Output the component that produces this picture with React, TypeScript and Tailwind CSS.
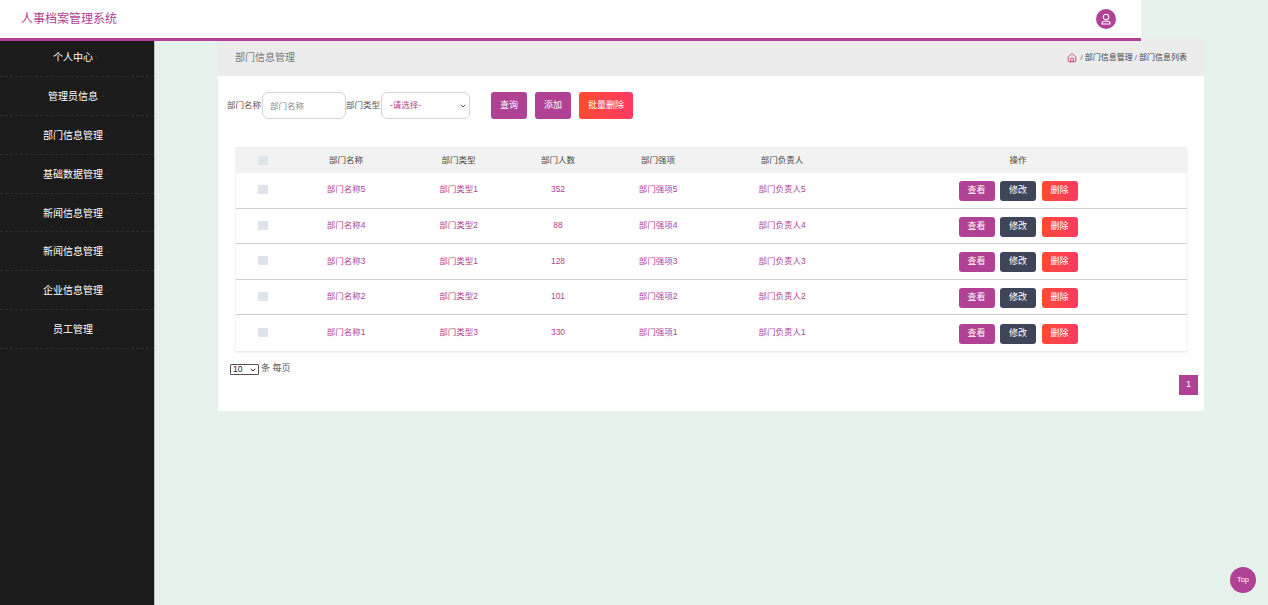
import { Home, ChevronDown } from 'lucide-react';

const menu = ['个人中心', '管理员信息', '部门信息管理', '基础数据管理', '新闻信息管理', '新闻信息管理', '企业信息管理', '员工管理'];

const rows = [
  { name: '部门名称5', type: '部门类型1', count: '352', item: '部门强项5', lead: '部门负责人5' },
  { name: '部门名称4', type: '部门类型2', count: '88', item: '部门强项4', lead: '部门负责人4' },
  { name: '部门名称3', type: '部门类型1', count: '128', item: '部门强项3', lead: '部门负责人3' },
  { name: '部门名称2', type: '部门类型2', count: '101', item: '部门强项2', lead: '部门负责人2' },
  { name: '部门名称1', type: '部门类型3', count: '330', item: '部门强项1', lead: '部门负责人1' },
];

const headers = ['部门名称', '部门类型', '部门人数', '部门强项', '部门负责人'];
const columns = 'grid grid-cols-[54px_112px_113px_86px_114px_134px_338px] items-center text-center text-[8.5px]';
const red = 'bg-gradient-to-r from-[#ff4a2e] to-[#ff3a62]';

function Checkbox() {
  return <span className="mx-auto block h-[9px] w-[10px] bg-[#dfe3ea]" />;
}

function UserIcon() {
  return (
    <svg width="12" height="12" viewBox="0 0 24 24" fill="none" stroke="#fff" strokeWidth="2.2">
      <circle cx="12" cy="8" r="5.5" />
      <path d="M4 22v-1.5A4 4 0 0 1 8 16.5h8a4 4 0 0 1 4 4V22z" />
    </svg>
  );
}

export default function App() {
  return (
    <div className="relative flex h-[605px] w-[1268px] overflow-hidden bg-[#e6f3ec] text-[9px] font-['Liberation_Sans','Noto_Sans_CJK_SC',sans-serif] text-[#555]">
      <header className="absolute top-0 left-0 z-10 flex h-[41px] w-[1141px] items-center justify-between border-b-[3px] border-[#b04194] bg-white pr-[25px] pl-[21px]">
        <h1 className="text-[12px] font-normal text-[#b04194]">人事档案管理系统</h1>
        <span className="flex h-5 w-5 items-center justify-center rounded-full bg-[#b04194]">
          <UserIcon />
        </span>
      </header>

      <aside className="w-[155px] shrink-0 border-r border-[#b9c2bd] bg-[#1b1b1b] pt-[38px]">
        {menu.map((label, i) => (
          <div key={i} className="flex h-[38.9px] items-center justify-center border-b border-dashed border-[#2e2e2e] pt-px text-[10px] text-white">
            {label}
            <ChevronDown size={8} color="#333" />
          </div>
        ))}
      </aside>

      <main className="ml-[63px] w-[986px] self-start pt-[38px]">
        <div className="flex h-[38px] items-center justify-between bg-[#ececec] px-[17px] text-[10px]">
          <span className="text-[#777]">部门信息管理</span>
          <span className="flex items-center gap-[2px] pt-[2px] text-[8px] text-[#444]">
            <Home size={10} strokeWidth={1.8} color="#c2185b" className="mr-[2px]" />
            <span className="text-[#b04194]">/</span> 部门信息管理 <span className="text-[#b04194]">/</span> 部门信息列表
          </span>
        </div>

        <section className="h-[335px] bg-white pt-4">
          <form className="flex h-[27px] items-center pl-[9px] text-[8.5px]">
            <label className="w-[35px] whitespace-nowrap">部门名称</label>
            <input placeholder="部门名称" className="h-[27px] w-[84px] rounded-md border border-[#d5d5d5] pl-[7px] placeholder:text-[#888]" />
            <label className="w-[35px] whitespace-nowrap">部门类型</label>
            <div className="relative">
              <select className="h-[27px] w-[89px] appearance-none rounded-md border border-[#d5d5d5] bg-white pl-[8px] text-[#b04194]">
                <option>-请选择-</option>
              </select>
              <ChevronDown size={8} strokeWidth={3} color="#555" className="absolute top-[10px] right-[3px]" />
            </div>
            <button type="button" className="ml-[21px] h-[27px] w-9 rounded-[3px] bg-[#b04194] text-[9px] text-white">查询</button>
            <button type="button" className="ml-2 h-[27px] w-9 rounded-[3px] bg-[#b04194] text-[9px] text-white">添加</button>
            <button type="button" className={`ml-2 h-[27px] w-[54px] rounded-[3px] text-[9px] text-white ${red}`}>批量删除</button>
          </form>

          <div className="mt-[28px] mr-[17px] ml-[18px] shadow-[0_1px_2px_rgba(0,0,0,0.12)]">
            <div className={`${columns} h-[26px] bg-[#f2f2f2] text-[#444]`}>
              <Checkbox />
              {headers.map((h) => <span key={h}>{h}</span>)}
              <span>操作</span>
            </div>
            {rows.map((row, i) => (
              <div key={row.name} className={`${columns} h-[35.6px] pb-px text-[#b04194] ${i < rows.length - 1 ? 'border-b border-[#cfcfcf]' : ''}`}>
                <Checkbox />
                <span>{row.name}</span>
                <span>{row.type}</span>
                <span>{row.count}</span>
                <span>{row.item}</span>
                <span>{row.lead}</span>
                <span className="mt-[3px] flex justify-center gap-[5.5px] text-[9px]">
                  <button type="button" className="h-5 w-9 rounded-[3px] bg-[#b04194] pb-px text-white">查看</button>
                  <button type="button" className="h-5 w-9 rounded-[3px] bg-[#3f4559] pb-px text-white">修改</button>
                  <button type="button" className={`h-5 w-9 rounded-[3px] pb-px text-white ${red}`}>删除</button>
                </span>
              </div>
            ))}
          </div>

          <div className="mt-[13px] flex h-[11px] items-center gap-[2px] pl-3">
            <div className="relative">
              <select className="block h-[11px] w-[29px] appearance-none rounded-[1px] border border-[#555] bg-white pl-[2px] text-[8.5px] leading-[9px] text-[#222]">
                <option>10</option>
              </select>
              <ChevronDown size={8} strokeWidth={3} color="#222" className="absolute top-[2px] right-[2px]" />
            </div>
            <span className="-mt-[2px]">条 每页</span>
          </div>

          <div className="mt-0 flex justify-end pr-[6px]">
            <span className="flex h-5 w-[19px] items-center justify-center bg-[#b04194] text-white">1</span>
          </div>
        </section>
      </main>

      <span className="absolute top-[567px] left-[1230px] flex h-[26px] w-[26px] items-center justify-center rounded-full bg-[#b04194] text-[7.5px] text-white">Top</span>
    </div>
  );
}
